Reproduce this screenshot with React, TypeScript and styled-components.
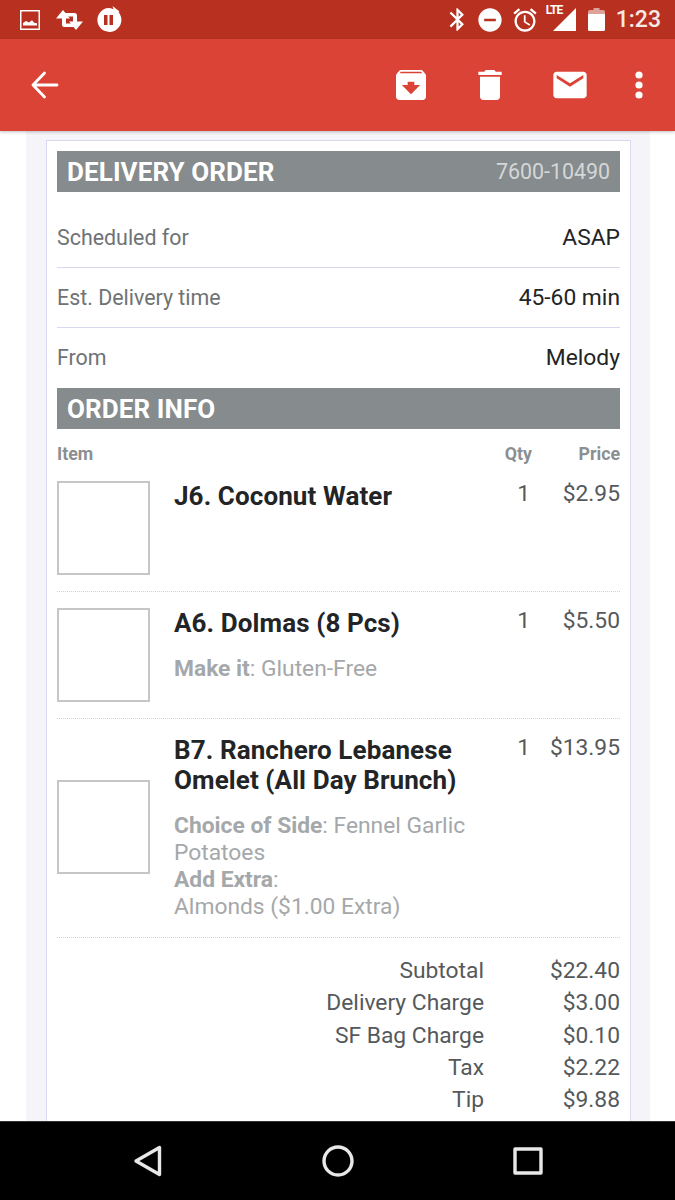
import React from 'react'
import styled, { createGlobalStyle } from 'styled-components'

const GlobalStyle = createGlobalStyle`
  html, body {
    margin: 0;
    padding: 0;
    background: #fff;
  }
  * {
    box-sizing: border-box;
  }
`

const Phone = styled.div`
  display: flex;
  flex-direction: column;
  width: 675px;
  height: 1200px;
  overflow: hidden;
  font-family: Roboto, 'Liberation Sans', sans-serif;
`

const StatusBar = styled.div`
  display: flex;
  align-items: center;
  justify-content: space-between;
  flex: 0 0 39px;
  padding: 0 14px 0 20px;
  background: #b83120;
  color: #fff;
`

const StatusGroup = styled.div`
  display: flex;
  align-items: center;
`

const Icon = styled.svg`
  display: block;
  flex-shrink: 0;
  fill: #fff;
  margin-left: ${p => p.$ml || 0}px;
`

const Signal = styled.div`
  position: relative;
  display: flex;
  width: 30px;
  margin-left: 7px;
  justify-content: flex-end;
`

const LteLabel = styled.span`
  position: absolute;
  left: 0;
  top: -4px;
  font-size: 12px;
  font-weight: 700;
  line-height: 12px;
  letter-spacing: -0.9px;
`

const Clock = styled.span`
  margin-left: 11px;
  font-size: 23px;
  font-weight: 500;
  line-height: 26px;
  color: #f7e9e6;
`

const Toolbar = styled.div`
  display: flex;
  align-items: center;
  justify-content: space-between;
  flex: 0 0 92px;
  padding: 0 31px 0 31px;
  background: #dc4337;
  box-shadow: 0 1px 3px rgba(0, 0, 0, 0.25);
  position: relative;
  z-index: 1;
`

const ToolbarActions = styled.div`
  display: flex;
  align-items: center;
`

const Page = styled.div`
  flex: 1;
  min-height: 0;
  overflow: hidden;
  padding: 0 25px 0 26px;
`

const Panel = styled.div`
  height: 100%;
  padding: 9px 19px 0 20px;
  background: #f5f5f9;
`

const Card = styled.div`
  height: 100%;
  padding: 10px 10px 0;
  background: #fff;
  border: 1px solid #d6d9ef;
  border-bottom: 0;
`

const SectionBar = styled.div`
  display: flex;
  align-items: center;
  justify-content: space-between;
  height: 41px;
  padding: 0 10px;
  background: #868b8d;
  color: #fff;
`

const SectionTitle = styled.span`
  font-size: 26px;
  font-weight: 700;
  letter-spacing: 0.1px;
`

const OrderNumber = styled.span`
  font-size: 21.4px;
  color: #d4d7d8;
`

const InfoRow = styled.div`
  display: flex;
  align-items: center;
  justify-content: space-between;
  height: 60px;
  border-bottom: 1px solid ${p => (p.$last ? 'transparent' : '#d6d9ef')};
  margin-top: ${p => (p.$first ? 16 : 0)}px;
`

const InfoLabel = styled.span`
  font-size: 21.4px;
  color: #6f7375;
`

const InfoValue = styled.span`
  font-size: 22.8px;
  color: #222426;
`

const ColumnHeader = styled.div`
  display: grid;
  grid-template-columns: 1fr 50px 88px;
  height: 36px;
  padding-top: 15px;
  font-size: 17.8px;
  font-weight: 700;
  line-height: 20px;
  color: #8b8f92;
`

const RightCell = styled.span`
  text-align: right;
`

const ItemRow = styled.div`
  display: grid;
  grid-template-columns: 93px 1fr 50px 88px;
  align-items: ${p => (p.$centered ? 'center' : 'start')};
  padding: 16px 0 ${p => (p.$last ? 17 : 16)}px;
  border-bottom: 1px dotted #cfd1d3;
`

const Thumb = styled.div`
  width: 93px;
  height: 94px;
  background: #fff;
  border: 2px solid #c4c6c8;
`

const ItemBody = styled.div`
  padding-left: 24px;
  align-self: start;
`

const ItemName = styled.div`
  font-size: 26px;
  font-weight: 700;
  line-height: 30px;
  letter-spacing: 0.1px;
  color: #222426;
`

const ItemOptions = styled.div`
  margin-top: 16.5px;
  font-size: 22.8px;
  line-height: 27px;
  color: #a5a8aa;

  b {
    font-weight: 700;
  }
`

const ItemQty = styled.div`
  align-self: start;
  padding-right: 2px;
  text-align: right;
  font-size: 22.8px;
  line-height: 26px;
  color: #55595b;
`

const ItemPrice = styled(ItemQty)`
  padding-right: 0;
`

const Totals = styled.div`
  display: grid;
  grid-template-columns: 1fr 136px;
  padding-top: 17.5px;
  font-size: 22.8px;
  line-height: 32.25px;
  color: #55595b;
`

const NavBar = styled.div`
  display: flex;
  align-items: center;
  justify-content: center;
  gap: 159px;
  flex: 0 0 79px;
  background: #000;
  border-top: 1px solid #333;
`

const NavIcon = styled.svg`
  display: block;
  fill: none;
  stroke: #e8e8e8;
  stroke-width: 3.4;
  stroke-linejoin: round;
`

const items = [
  { name: 'J6. Coconut Water', qty: '1', price: '$2.95' },
  { name: 'A6. Dolmas (8 Pcs)', qty: '1', price: '$5.50', options: <><b>Make it</b>: Gluten-Free</> },
  {
    name: 'B7. Ranchero Lebanese Omelet (All Day Brunch)',
    qty: '1',
    price: '$13.95',
    options: <><b>Choice of Side</b>: Fennel Garlic Potatoes<br /><b>Add Extra</b>:<br />Almonds ($1.00 Extra)</>,
    centered: true,
  },
]

const totals = [
  ['Subtotal', '$22.40'],
  ['Delivery Charge', '$3.00'],
  ['SF Bag Charge', '$0.10'],
  ['Tax', '$2.22'],
  ['Tip', '$9.88'],
]

const App = () => (
  <Phone>
    <GlobalStyle />
    <StatusBar>
      <StatusGroup>
        <Icon width={20} height={20} viewBox="0 0 20 20">
          <path fillRule="evenodd" d="M0 0h20v20H0zM1.5 1.5v17h17v-17z" />
          <path d="M3 15.5v-2.6l3-2 3 1.6 3-2.2 2.2 2.4 2.8.6v2.2z" />
        </Icon>
        <Icon $ml={16} width={27} height={20} viewBox="0 0 27 20">
          <path d="M7 0l7 8.5H10V13.500H17l3 3.500H8.500A2.500 2.500 0 0 1 6 14.500V8.500H0z" />
          <path d="M20 20l-7-8.500h4V6.500H10L7 3h11.500A2.500 2.500 0 0 1 21 5.500v6h6z" />
        </Icon>
        <Icon $ml={12} width={27} height={27} viewBox="0 0 27 27">
          <path fillRule="evenodd" d="M13 2a12 12 0 0 1 5.500 1.300L17.500 0l7 5.500-1 .6A12 12 0 1 1 13 2zM9 9v10h3.500V9zm5.500 0v10H18V9z" />
        </Icon>
      </StatusGroup>
      <StatusGroup>
        <Icon width={27} height={27} viewBox="0 0 24 24">
          <path d="M17.71 7.71L12 2h-1v7.59L6.41 5 5 6.41 10.59 12 5 17.59 6.41 19 11 14.41V22h1l5.71-5.71-4.3-4.29 4.3-4.29zM13 5.830l1.88 1.88L13 9.590V5.830zm1.88 10.46L13 18.170v-3.760l1.88 1.88z" />
        </Icon>
        <Icon $ml={5} width={28} height={28} viewBox="0 0 24 24">
          <path d="M12 2C6.48 2 2 6.48 2 12s4.48 10 10 10 10-4.48 10-10S17.52 2 12 2zm5 11H7v-2h10v2z" />
        </Icon>
        <Icon $ml={7} width={28} height={28} viewBox="0 0 24 24">
          <path d="M22 5.720l-4.600-3.860-1.290 1.530 4.600 3.860L22 5.720zM7.880 3.390L6.600 1.860 2 5.710l1.290 1.530 4.590-3.850zM12.500 8H11v6l4.750 2.850.75-1.230-4-2.370V8zM12 4c-4.970 0-9 4.030-9 9s4.030 9 9 9 9-4.030 9-9-4.030-9-9-9zm0 16c-3.870 0-7-3.130-7-7s3.130-7 7-7 7 3.130 7 7-3.130 7-7 7z" />
        </Icon>
        <Signal>
          <LteLabel>LTE</LteLabel>
          <Icon width={23} height={23} viewBox="0 0 23 23">
            <path d="M23 0v23H0z" />
          </Icon>
        </Signal>
        <Icon $ml={12} width={17} height={23} viewBox="0 0 17 23">
          <path opacity="0.55" d="M5.500 0h6v2H15a2 2 0 0 1 2 2v2H0V4a2 2 0 0 1 2-2h3.500z" />
          <path d="M0 6h17v15.500a1.500 1.500 0 0 1-1.500 1.500h-14A1.500 1.500 0 0 1 0 21.500z" />
        </Icon>
        <Clock>1:23</Clock>
      </StatusGroup>
    </StatusBar>
    <Toolbar>
      <svg width={28} height={28} viewBox="0 0 28 28" fill="none" stroke="#fff" strokeWidth="2.8" strokeLinecap="round" strokeLinejoin="round" style={{ display: 'block' }}>
        <path d="M26 14H2M13.500 2 2 14l11.500 12" />
      </svg>
      <ToolbarActions>
        <Icon width={40} height={40} viewBox="0 0 24 24">
          <path d="M20.540 5.230l-1.390-1.680C18.880 3.210 18.470 3 18 3H6c-.47 0-.88.21-1.160.55L3.460 5.230C3.170 5.570 3 6.020 3 6.500V19c0 1.100.9 2 2 2h14c1.100 0 2-.9 2-2V6.500c0-.48-.17-.93-.46-1.270zM12 17.500L6.500 12H10v-2h4v2h3.500L12 17.500zM5.120 5l.81-1h12l.94 1H5.120z" />
        </Icon>
        <Icon $ml={39} width={40} height={40} viewBox="0 0 24 24">
          <path d="M6 19c0 1.100.9 2 2 2h8c1.100 0 2-.9 2-2V7H6v12zM19 4h-3.500l-1-1h-5l-1 1H5v2h14V4z" />
        </Icon>
        <Icon $ml={40} width={40} height={40} viewBox="0 0 24 24">
          <path d="M20 4H4c-1.100 0-1.990.9-1.990 2L2 18c0 1.100.9 2 2 2h16c1.100 0 2-.9 2-2V6c0-1.100-.9-2-2-2zm0 4l-8 5-8-5V6l8 5 8-5v2z" />
        </Icon>
        <Icon $ml={44} width={10} height={28} viewBox="0 0 10 28">
          <circle cx="5" cy="4" r="3.600" />
          <circle cx="5" cy="14" r="3.600" />
          <circle cx="5" cy="24" r="3.600" />
        </Icon>
      </ToolbarActions>
    </Toolbar>
    <Page>
      <Panel>
        <Card>
          <SectionBar>
            <SectionTitle>DELIVERY ORDER</SectionTitle>
            <OrderNumber>7600-10490</OrderNumber>
          </SectionBar>
          <InfoRow $first>
            <InfoLabel>Scheduled for</InfoLabel>
            <InfoValue>ASAP</InfoValue>
          </InfoRow>
          <InfoRow>
            <InfoLabel>Est. Delivery time</InfoLabel>
            <InfoValue>45-60 min</InfoValue>
          </InfoRow>
          <InfoRow $last>
            <InfoLabel>From</InfoLabel>
            <InfoValue>Melody</InfoValue>
          </InfoRow>
          <SectionBar>
            <SectionTitle>ORDER INFO</SectionTitle>
          </SectionBar>
          <ColumnHeader>
            <span>Item</span>
            <RightCell>Qty</RightCell>
            <RightCell>Price</RightCell>
          </ColumnHeader>
          {items.map((item, i) => (
            <ItemRow key={item.name} $centered={item.centered} $last={i === items.length - 1}>
              <Thumb />
              <ItemBody>
                <ItemName>{item.name}</ItemName>
                {item.options && <ItemOptions>{item.options}</ItemOptions>}
              </ItemBody>
              <ItemQty>{item.qty}</ItemQty>
              <ItemPrice>{item.price}</ItemPrice>
            </ItemRow>
          ))}
          <Totals>
            {totals.map(([label, value]) => (
              <React.Fragment key={label}>
                <RightCell>{label}</RightCell>
                <RightCell>{value}</RightCell>
              </React.Fragment>
            ))}
          </Totals>
        </Card>
      </Panel>
    </Page>
    <NavBar>
      <NavIcon width={30} height={32} viewBox="0 0 30 32">
        <path d="M26.500 2.500v27L3 16z" />
      </NavIcon>
      <NavIcon width={32} height={32} viewBox="0 0 32 32">
        <ellipse cx="16" cy="16" rx="14" ry="14" />
      </NavIcon>
      <NavIcon width={30} height={28} viewBox="0 0 30 28">
        <rect x="2" y="2" width="26" height="24" />
      </NavIcon>
    </NavBar>
  </Phone>
)

export default App
